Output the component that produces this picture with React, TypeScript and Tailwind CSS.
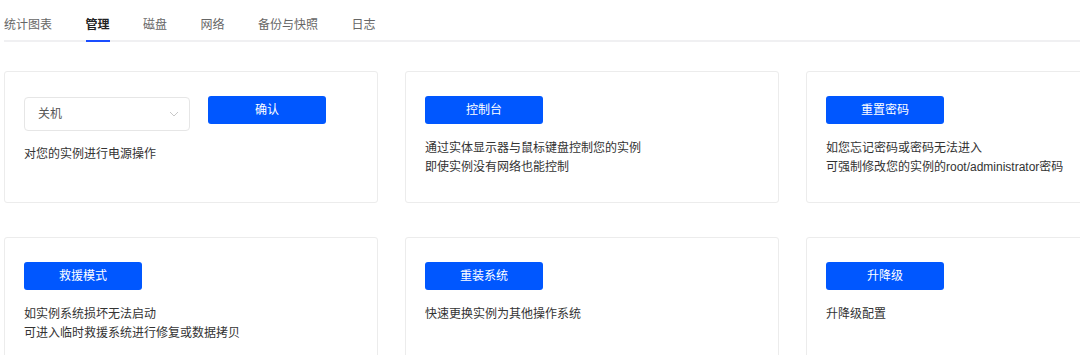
const tabs = ["统计图表", "管理", "磁盘", "网络", "备份与快照", "日志"];

type Card = { action: string; lines: string[]; withSelect?: boolean };

const cards: Card[] = [
  { action: "确认", lines: ["对您的实例进行电源操作"], withSelect: true },
  { action: "控制台", lines: ["通过实体显示器与鼠标键盘控制您的实例", "即使实例没有网络也能控制"] },
  { action: "重置密码", lines: ["如您忘记密码或密码无法进入", "可强制修改您的实例的root/administrator密码"] },
  { action: "救援模式", lines: ["如实例系统损坏无法启动", "可进入临时救援系统进行修复或数据拷贝"] },
  { action: "重装系统", lines: ["快速更换实例为其他操作系统"] },
  { action: "升降级", lines: ["升降级配置"] },
];

const BlueButton = ({ label }: { label: string }) => (
  <button
    type="button"
    className="w-[118px] h-[28px] rounded-[3px] bg-[#0057ff] text-white text-[12px] leading-none"
  >
    {label}
  </button>
);

const PowerSelect = () => (
  <div className="mt-[1px] w-[166px] h-[34px] rounded-[4px] border border-[#e6e6e6] flex items-center justify-between pl-[13px] pr-[10px] text-[12px] text-[#555]">
    <span>关机</span>
    <svg width="10" height="6" viewBox="0 0 10 6" fill="none">
      <path d="M1 1l4 4 4-4" stroke="#c8c8c8" strokeWidth="1" />
    </svg>
  </div>
);

const App = () => {
  return (
    <div
      className="w-[1080px] h-[355px] overflow-hidden bg-white pl-[4px]"
      style={{ fontFamily: '"Liberation Sans", "Noto Sans CJK SC", sans-serif' }}
    >
      <div className="flex gap-[33.5px] border-b-2 border-[#f0f0f2]">
        {tabs.map((t) => (
          <div
            key={t}
            className={
              t === "管理"
                ? "-mb-[2px] pt-[16px] pb-[6px] border-b-2 border-[#1a4dff] text-[12px] leading-[18px] font-semibold text-[#222]"
                : "-mb-[2px] pt-[16px] pb-[6px] border-b-2 border-transparent text-[12px] leading-[18px] text-[#666]"
            }
          >
            {t}
          </div>
        ))}
      </div>

      <div className="mt-[29px] grid grid-cols-[374px_374px_374px] gap-x-[27px] gap-y-[34px]">
        {cards.map((c) => (
          <div
            key={c.action}
            className="h-[132px] rounded-[3px] border border-[#ececec] pl-[19px] pt-[24px]"
          >
            {c.withSelect ? (
              <div className="flex items-start gap-[18px]">
                <PowerSelect />
                <BlueButton label={c.action} />
              </div>
            ) : (
              <BlueButton label={c.action} />
            )}
            <div
              className={
                c.withSelect
                  ? "mt-[14px] text-[12px] leading-[19px] text-[#333]"
                  : "mt-[15px] text-[12px] leading-[19px] text-[#333]"
              }
            >
              {c.lines.map((l) => (
                <div key={l}>{l}</div>
              ))}
            </div>
          </div>
        ))}
      </div>
    </div>
  );
};

export default App;
